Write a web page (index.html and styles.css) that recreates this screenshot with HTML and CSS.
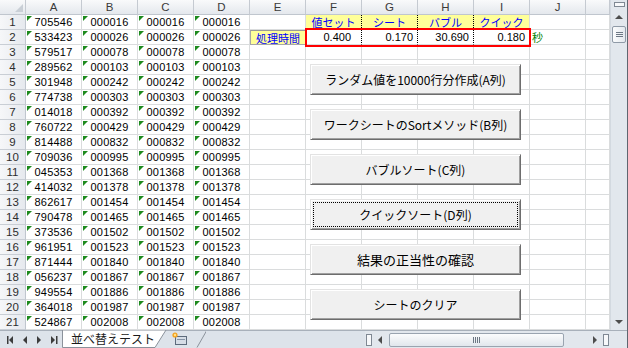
FILE: index.html
```html
<!DOCTYPE html>
<html lang="ja">
<head>
    <meta charset="UTF-8">
    <title>並べ替えテスト</title>
    <link rel="stylesheet" href="styles.css">
</head>
<body>
    <div class="window">
        <div class="main">
            <div class="sheet">
                <div class="row head">
                    <div class="corner"><span></span></div>
                    <div>A</div><div>B</div><div>C</div><div>D</div><div>E</div>
                    <div>F</div><div>G</div><div>H</div><div>I</div><div>J</div><div></div>
                </div>
                <div id="rows"></div>

                <!-- 処理時間の枠 -->
                <div class="redbox"></div>

                <div class="buttons">
                    <button>ランダム値を10000行分作成(A列)</button>
                    <button>ワークシートのSortメソッド(B列)</button>
                    <button>バブルソート(C列)</button>
                    <button class="focus">クイックソート(D列)</button>
                    <button class="wide">結果の正当性の確認</button>
                    <button>シートのクリア</button>
                </div>
            </div>

            <div class="vscroll">
                <div class="vsplit"><span></span></div>
                <div class="varrow"><span class="up"></span></div>
                <div class="vthumb"><i></i><i></i><i></i></div>
                <div class="vtrack"></div>
                <div class="varrow"><span class="down"></span></div>
            </div>
        </div>

        <div class="tabbar">
            <div class="nav">
                <svg width="62" height="18" viewBox="0 0 62 18">
                    <rect x="7" y="5" width="1.5" height="8" fill="#3c3c3c"/>
                    <polygon points="13,5 9,9 13,13" fill="#3c3c3c"/>
                    <polygon points="27,5 23,9 27,13" fill="#3c3c3c"/>
                    <polygon points="37,5 41,9 37,13" fill="#3c3c3c"/>
                    <polygon points="51,5 55,9 51,13" fill="#3c3c3c"/>
                    <rect x="56" y="5" width="1.5" height="8" fill="#3c3c3c"/>
                </svg>
            </div>
            <div class="tab">
                <svg class="tab-shape" width="106" height="18" viewBox="0 0 106 18">
                    <path d="M0.5,0 L0.5,17.5 L93,17.5 L104,0 Z" fill="#ffffff" stroke="#8b929b"/>
                </svg>
                <span>並べ替えテスト</span>
            </div>
            <div class="newtab">
                <svg width="40" height="18" viewBox="0 0 40 18">
                    <path d="M31,17.5 L41,0" stroke="#8b929b" fill="none"/>
                    <rect x="9.5" y="6.5" width="11" height="8" fill="#d6dde6" stroke="#5d6b7c"/>
                    <rect x="11" y="9" width="8" height="1" fill="#8796a8"/>
                    <circle cx="9" cy="5" r="2.6" fill="#f4a323"/>
                    <circle cx="9" cy="5" r="1.2" fill="#ffe08a"/>
                </svg>
            </div>
            <div class="spacer"></div>
            <div class="hscroll">
                <div class="hsplit"></div>
                <div class="harrow"><span class="left"></span></div>
                <div class="htrack">
                    <div class="hthumb"><i></i><i></i><i></i><i></i></div>
                </div>
                <div class="harrow"><span class="right"></span></div>
                <div class="hsplit"></div>
            </div>
            <div class="scorner"></div>
        </div>
    </div>

    <script>
        const colA = ['705546', '533423', '579517', '289562', '301948', '774738', '014018',
            '760722', '814488', '709036', '045353', '414032', '862617', '790478', '373536',
            '961951', '871444', '056237', '949554', '364018', '524867'];
        const sorted = ['000016', '000026', '000078', '000103', '000242', '000303', '000392',
            '000429', '000832', '000995', '001368', '001378', '001454', '001465', '001502',
            '001523', '001840', '001867', '001886', '001987', '002008'];

        const rows = document.getElementById('rows');
        for (let i = 0; i < 21; i++) {
            let html = `<div class="rh">${i + 1}</div>`;
            html += `<div class="txt">${colA[i]}</div>`;
            for (let k = 0; k < 3; k++) {
                html += `<div class="txt">${sorted[i]}</div>`;
            }

            if (i === 0) {
                // 見出し行
                html += '<div></div>';
                html += '<div class="lbl dot">値セット</div><div class="lbl dot">シート</div>';
                html += '<div class="lbl dot">バブル</div><div class="lbl">クイック</div>';
                html += '<div></div>';
            } else if (i === 1) {
                // 処理時間
                html += '<div class="lbl time">処理時間</div>';
                html += '<div class="num dot first">0.400</div><div class="num dot">0.170</div>';
                html += '<div class="num dot">30.690</div><div class="num">0.180</div>';
                html += '<div class="unit">秒</div>';
            } else {
                html += '<div></div><div></div><div></div><div></div><div></div><div></div>';
            }
            html += '<div></div>';

            const row = document.createElement('div');
            row.className = 'row';
            row.innerHTML = html;
            rows.appendChild(row);
        }
    </script>
</body>
</html>
```

FILE: styles.css
```css
body {
    margin: 0;
    width: 628px;
    height: 348px;
    overflow: hidden;
    background: #ffffff;
    font-family: "Liberation Sans", "Noto Sans CJK JP", sans-serif;
}

.window {
    display: flex;
    flex-direction: column;
    height: 348px;
    border-right: 1px solid #5f6670;
    box-sizing: border-box;
}

.main {
    display: flex;
    height: 330px;
}

.sheet {
    position: relative;
    width: 610px;
    overflow: hidden;
}

/* グリッド */
.row {
    display: grid;
    grid-template-columns: 26px repeat(10, 56px) 24px;
    height: 15px;
}

.row > div {
    position: relative;
    box-sizing: border-box;
    height: 15px;
    border-right: 1px solid #dadcdd;
    border-bottom: 1px solid #dadcdd;
    font-size: 11px;
    line-height: 14px;
    text-align: center;
    white-space: nowrap;
    overflow: hidden;
    color: #000000;
}

.row.head > div {
    background: linear-gradient(#f9fafb, #e4e8ed);
    border-right-color: #c5cad1;
    border-bottom-color: #c0c6ce;
    color: #3a3a3a;
    font-size: 11.5px;
}

.row.head .corner span {
    position: absolute;
    right: 2px;
    bottom: 2px;
    width: 0;
    height: 0;
    border-left: 8px solid transparent;
    border-bottom: 8px solid #c9cfd6;
}

.row > .rh {
    background: linear-gradient(90deg, #f6f7f9, #e6e9ee);
    border-right-color: #c0c6ce;
    border-bottom-color: #c9ced5;
    color: #2d2d2d;
    font-size: 11.5px;
}

.row > .txt {
    letter-spacing: 0.2px;
}

.row > .txt::before {
    content: "";
    position: absolute;
    left: 1px;
    top: 1px;
    border-top: 5px solid #1d8a1d;
    border-right: 5px solid transparent;
}

.row > .lbl {
    background: #ffff99;
    color: #0000ff;
    font-family: "Noto Sans CJK JP", sans-serif;
    font-size: 11px;
    line-height: 14px;
}

.row > .time {
    border: 1px solid #a7a7a7;
    border-top-color: #9a9a9a;
}

.row > .dot {
    border-right: 1px dotted #000000;
}

.row > .num {
    text-align: right;
    padding-right: 4px;
}

.row > .num.first {
    padding-right: 10px;
}

.row > .unit {
    text-align: left;
    padding-left: 2px;
    color: #008000;
    font-family: "Noto Sans CJK JP", sans-serif;
}

.redbox {
    position: absolute;
    left: 305px;
    top: 28px;
    width: 226px;
    height: 19px;
    box-sizing: border-box;
    border: 2px solid #ff0000;
}

/* ボタン */
.buttons {
    position: absolute;
    left: 310px;
    top: 64px;
    width: 211px;
    display: flex;
    flex-direction: column;
    gap: 14px;
}

.buttons button {
    height: 31px;
    margin: 0;
    padding: 0;
    background: #f0f0f0;
    border: 1px solid;
    border-color: #e3e3e3 #6d6d6d #6d6d6d #e3e3e3;
    box-shadow: inset 1px 1px #ffffff, inset -1px -1px #a0a0a0;
    font-family: "Noto Sans CJK JP", sans-serif;
    font-size: 12px;
    color: #000000;
    cursor: pointer;
}

.buttons button.wide {
    font-size: 13px;
}

.buttons button.focus {
    outline: 1px dotted #000000;
    outline-offset: -4px;
}

/* 縦スクロールバー */
.vscroll {
    width: 17px;
    display: flex;
    flex-direction: column;
    background: #e2e7ed;
    border-left: 1px solid #d3d9e0;
    box-sizing: border-box;
}

.vsplit {
    height: 9px;
    display: flex;
    justify-content: center;
    align-items: center;
}

.vsplit span {
    width: 11px;
    height: 5px;
    box-sizing: border-box;
    border: 1px solid #7f8893;
    background: #f7f8fa;
}

.varrow {
    height: 16px;
    display: flex;
    justify-content: center;
    align-items: center;
}

.varrow span {
    width: 0;
    height: 0;
    border-left: 4px solid transparent;
    border-right: 4px solid transparent;
}

.varrow .up {
    border-bottom: 4px solid #4d4d4d;
}

.varrow .down {
    border-top: 4px solid #4d4d4d;
}

.vthumb {
    height: 17px;
    margin: 1px 1px 0;
    box-sizing: border-box;
    border: 1px solid #8f9aa7;
    border-radius: 2px;
    background: linear-gradient(90deg, #fbfcfd, #e3e8ee);
    display: flex;
    flex-direction: column;
    justify-content: center;
    align-items: center;
    gap: 1px;
}

.vthumb i {
    width: 7px;
    height: 1px;
    background: #6c7784;
}

.vtrack {
    flex: 1;
}

/* シート見出し */
.tabbar {
    display: flex;
    height: 18px;
    background: #dde3ea;
    border-top: 1px solid #a8b0ba;
    box-sizing: border-box;
}

.nav {
    width: 62px;
}

.tab {
    position: relative;
    width: 104px;
    margin-top: -1px;
    height: 18px;
    display: flex;
    align-items: center;
    justify-content: flex-start;
}

.tab-shape {
    position: absolute;
    left: 0;
    top: 0;
}

.tab span {
    position: relative;
    padding-left: 9px;
    font-family: "Noto Sans CJK JP", sans-serif;
    font-size: 12px;
    line-height: 16px;
    color: #1a1a1a;
}

.newtab {
    width: 40px;
    margin-top: -1px;
}

.spacer {
    flex: 1;
}

.hscroll {
    width: 245px;
    display: flex;
    align-items: center;
    background: #e2e7ed;
}

.hsplit {
    width: 6px;
    height: 12px;
    margin: 0 1px;
    box-sizing: border-box;
    border: 1px solid #7f8893;
    background: #f7f8fa;
}

.harrow {
    width: 14px;
    display: flex;
    justify-content: center;
}

.harrow span {
    width: 0;
    height: 0;
    border-top: 4px solid transparent;
    border-bottom: 4px solid transparent;
}

.harrow .left {
    border-right: 4px solid #4d4d4d;
}

.harrow .right {
    border-left: 4px solid #4d4d4d;
}

.htrack {
    flex: 1;
    height: 15px;
    display: flex;
    align-items: center;
}

.hthumb {
    width: 175px;
    height: 14px;
    margin-left: 2px;
    box-sizing: border-box;
    border: 1px solid #9aa4b0;
    border-radius: 2px;
    background: linear-gradient(#fbfcfd, #e1e6ec);
    display: flex;
    justify-content: center;
    align-items: center;
    gap: 1px;
}

.hthumb i {
    width: 1px;
    height: 6px;
    background: #6c7784;
}

.scorner {
    width: 17px;
    background: #e2e7ed;
}
```
